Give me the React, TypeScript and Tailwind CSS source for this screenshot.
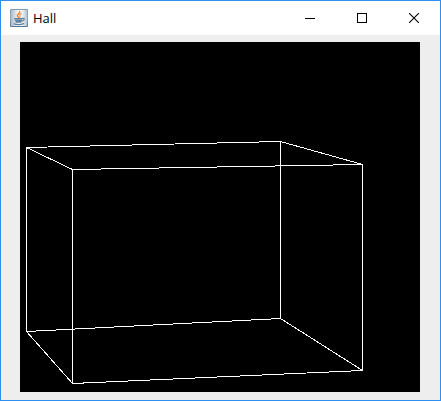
import type { ReactNode } from "react";

type Point = [number, number];

const top: Point[] = [[6, 105], [260, 99], [342, 122], [52, 127]];
const bottom: Point[] = [[6, 289], [260, 276], [342, 328], [52, 341]];

const edges: [Point, Point][] = top.flatMap((p, i): [Point, Point][] => {
  const next = (i + 1) % top.length;
  return [
    [p, top[next]],
    [bottom[i], bottom[next]],
    [p, bottom[i]],
  ];
});

function JavaIcon() {
  return (
    <svg className="h-[18px] w-[18px] shrink-0" viewBox="0 0 18 18" aria-hidden="true">
      <defs>
        <linearGradient id="tile" x1="0" y1="0" x2="0" y2="1">
          <stop offset="0" stopColor="#7f9bb3" />
          <stop offset="0.5" stopColor="#8fa9be" />
          <stop offset="1" stopColor="#54789a" />
        </linearGradient>
        <linearGradient id="face" x1="0" y1="0" x2="1" y2="0">
          <stop offset="0" stopColor="#a9bccb" />
          <stop offset="0.45" stopColor="#f6f8fa" />
          <stop offset="0.7" stopColor="#eef2f5" />
          <stop offset="1" stopColor="#b4c6d4" />
        </linearGradient>
      </defs>
      <rect width="18" height="18" rx="1" fill="url(#tile)" />
      <rect x="1" y="1" width="16" height="16" fill="url(#face)" />
      <g fill="none" strokeLinecap="round">
        <path d="M9.6 2.6c1 2-2.8 2.4-2.2 4.2.2.7.9 1 1.2 1.6" stroke="#e8822f" strokeWidth="1.5" />
        <path d="M11.4 4.8c-1.6.8-2.2 1.5-1.4 2.3.4.5.2.9-.2 1.3" stroke="#eb9550" strokeWidth="1.1" />
        <path d="M4.8 9.8h7.2M5.6 11.5h5.8M6.2 13h4.6" stroke="#5f819e" strokeWidth="1.5" />
        <path d="M12.4 9.4c2.6-.6 2.4 2-.4 2.8" stroke="#5f819e" strokeWidth="1.2" />
        <path d="M4 14.9c2.5.8 7 .8 9.6-.2" stroke="#5f819e" strokeWidth="1.3" />
      </g>
    </svg>
  );
}

function WindowButton({ label, children }: { label: string; children: ReactNode }) {
  return (
    <button
      type="button"
      aria-label={label}
      className="flex w-13 items-center justify-center text-black hover:bg-gray-200"
    >
      <svg className="h-[10px] w-[10px]" viewBox="0 0 10 10" fill="none" stroke="currentColor">
        {children}
      </svg>
    </button>
  );
}

export default function App() {
  return (
    <div className="flex min-h-screen flex-col border border-[#2f8ff0] bg-[#eeeeee] font-['Open_Sans','Noto_Sans',sans-serif]">
      <header className="flex h-[34px] items-stretch bg-white pl-[9px]">
        <div className="flex flex-1 items-center gap-[5px]">
          <JavaIcon />
          <h1 className="text-[13px] leading-4 text-black">Hall</h1>
        </div>
        <WindowButton label="Minimize">
          <path d="M0 5.5h10" shapeRendering="crispEdges" />
        </WindowButton>
        <WindowButton label="Maximize">
          <rect x="0.5" y="0.5" width="9" height="9" shapeRendering="crispEdges" />
        </WindowButton>
        <WindowButton label="Close">
          <path d="M0 0l10 10M10 0L0 10" strokeWidth="1.1" />
        </WindowButton>
      </header>
      <main className="flex-1 pt-[7px] pr-5 pb-2 pl-[19px]">
        <svg
          className="block w-full bg-black"
          viewBox="0 0 400 350"
          role="img"
          aria-label="Wireframe hall"
          stroke="white"
          shapeRendering="crispEdges"
        >
          {edges.map(([from, to], i) => (
            <line
              key={i}
              x1={from[0] + 0.5}
              y1={from[1] + 0.5}
              x2={to[0] + 0.5}
              y2={to[1] + 0.5}
              strokeLinecap="square"
            />
          ))}
        </svg>
      </main>
    </div>
  );
}
